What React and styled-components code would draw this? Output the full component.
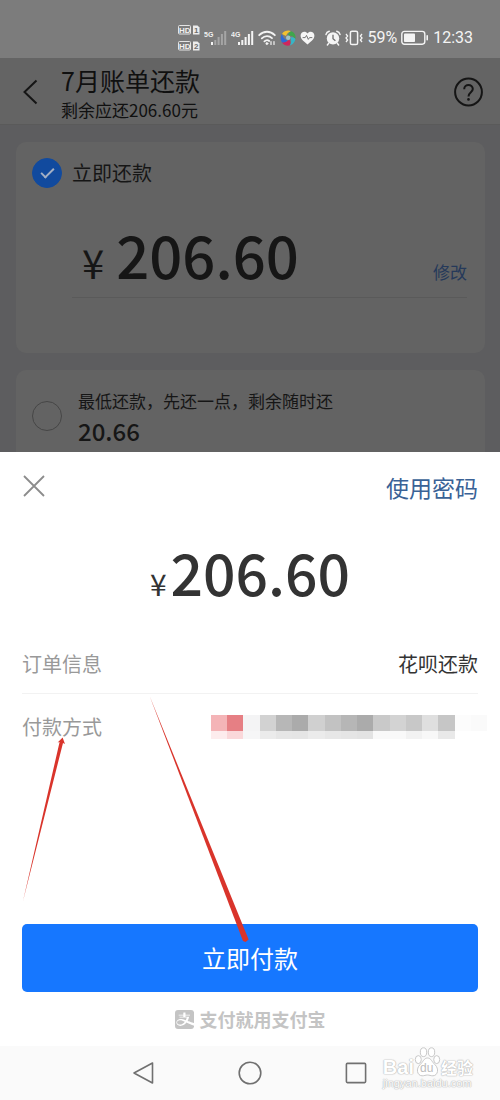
import React from 'react';
import styled, {createGlobalStyle, css} from 'styled-components';
import {BsAlipay} from 'react-icons/bs';

const FONTS = {
  text: "'Noto Sans CJK SC', 'Noto Sans', sans-serif",
  status: "Roboto, 'Noto Sans CJK SC', sans-serif",
  latin: "'Liberation Sans', Arial, sans-serif"
};

const COLORS = {
  statusBar: '#7c7c7c',
  header: '#646464',
  page: '#5d5d5f',
  card: '#636363',
  dimLine: '#5a5a5a',
  dimText: '#161616',
  dimLink: '#25395a',
  text: '#333333',
  label: '#999999',
  link: '#3a6296',
  primary: '#1677ff',
  slogan: '#c4c4c4',
  line: '#f2f2f2',
  nav: '#fafafa',
  arrow: '#d9342b'
};

const GlobalStyle = createGlobalStyle`
  *, *::before, *::after {
    box-sizing: border-box;
  }

  body {
    margin: 0;
    background: #ffffff;
    font-family: ${FONTS.text};
  }

  h1, p, dl, dt, dd {
    margin: 0;
    font-weight: 400;
  }
`;

const buttonReset = css`
  appearance: none;
  background: none;
  border: 0;
  cursor: pointer;
  font-family: inherit;
  padding: 0;
`;

const Screen = styled.div`
  display: flex;
  flex-direction: column;
  min-height: 100vh;
`;

/* Status bar */

const StatusBar = styled.div`
  align-items: center;
  background: ${COLORS.statusBar};
  color: #f4f4f4;
  display: flex;
  font-family: ${FONTS.status};
  font-size: 16px;
  gap: 10px;
  height: 58px;
  justify-content: flex-end;
  line-height: 20px;
  padding: 18px 27px 0 0;
`;

const StatusGroup = styled.div`
  align-items: center;
  display: flex;
  gap: 4px;

  svg {
    display: block;
    flex: none;
  }
`;

const HdIcon = () => (
  <svg width="22" height="26" viewBox="0 0 22 26" fontFamily={FONTS.latin} fontWeight="700" fontSize="8">
    {['1', '2'].map((sim, i) => (
      <g key={sim} transform={`translate(0 ${i * 16})`}>
        <rect x="0.5" y="0.5" width="12" height="8.5" rx="1" fill="none" stroke="#e4e4e4" />
        <text x="1" y="7.6" fill="#f0f0f0">HD</text>
        <path d="M15 0.5h4.5l2 2V9.5h-6.5z" fill="#ececec" />
        <text x="16" y="7.8" fill="#6c6c6c">{sim}</text>
      </g>
    ))}
  </svg>
);

const SignalIcon = ({label, strength}) => (
  <svg width="23" height="18" viewBox="0 0 23 18">
    <text x="0" y="8" fill="#f0f0f0" fontFamily={FONTS.latin} fontWeight="700" fontSize="7">{label}</text>
    {[3, 5, 8, 11, 14].map((h, i) => (
      <rect
        key={h}
        x={7 + i * 3.3}
        y={16 - h}
        width="2"
        height={h}
        fill="#f4f4f4"
        opacity={i < strength ? 1 : 0.35}
      />
    ))}
  </svg>
);

const WifiIcon = () => (
  <svg width="18" height="16" viewBox="0 0 18 16" fill="none" stroke="#f4f4f4" strokeWidth="1.8" strokeLinecap="round">
    <path d="M1.2 5.2C5.8 0.6 12.2 0.6 16.8 5.2" />
    <path d="M3.8 8.4C6.8 5.4 11.2 5.4 14 8.2" />
    <path d="M6.4 11.4C8 9.9 9.8 9.9 11.2 11" />
    <circle cx="8.9" cy="13.6" r="1" fill="#f4f4f4" strokeWidth="0.8" />
    <path d="M13 14.5V11.5M16 11.5v3" strokeWidth="1.2" />
  </svg>
);

const BallIcon = () => (
  <svg width="16" height="16" viewBox="0 0 16 16">
    <path d="M2 4C4 0.5 9 0 11 1.2C8.5 2 6.8 3.6 6 6Z" fill="#f2c230" />
    <path d="M11 1.2C15 2.5 16 6 15.4 9C13.5 6.2 11.5 5.2 8 5.4C8.4 3.2 9.6 2 11 1.2Z" fill="#3fa64b" />
    <path d="M15.4 9C14.8 12.5 12 15 9.6 15.6C11.4 13 11.6 11 10.4 7.4C12.6 7 14.4 7.6 15.4 9Z" fill="#35b6c8" />
    <path d="M9.6 15.6C6 16.2 3 14.4 1.8 12.2C5 12.6 7 12 9.4 9.6C10.8 12 10.6 14 9.6 15.6Z" fill="#d0265c" />
    <path d="M1.8 12.2C0 9 0.4 6 2 4C2.6 7 4 9 7.6 10.4C6 12 4 12.8 1.8 12.2Z" fill="#2c6bd8" />
    <circle cx="8.2" cy="7.8" r="2.2" fill="#9fc4c8" />
  </svg>
);

const HeartIcon = () => (
  <svg width="15" height="14" viewBox="0 0 15 14">
    <path d="M7.5 13.4C2.6 9.8 0.6 7.6 0.6 4.6C0.6 0.6 5.6-0.6 7.5 2.6C9.4-0.6 14.4 0.6 14.4 4.6C14.4 7.6 12.4 9.8 7.5 13.4Z" fill="#f6f6f6" />
    <path d="M2.6 6.6h2.6l1.3-2.2 1.8 4 1.2-1.8h2.8" fill="none" stroke="#777777" />
  </svg>
);

const AlarmIcon = () => (
  <svg width="16" height="16" viewBox="0 0 16 16">
    <circle cx="8" cy="8.4" r="6.2" fill="#f4f4f4" />
    <path d="M1 4.4C1.4 2.8 2.6 1.6 4.2 1.2M15 4.4C14.6 2.8 13.4 1.6 11.8 1.2M3.6 13.4L2.4 15M12.4 13.4l1.2 1.6" fill="none" stroke="#f4f4f4" strokeWidth="1.5" strokeLinecap="round" />
    <path d="M8 4.8v4l2.4 2" fill="none" stroke="#6e6e6e" strokeWidth="1.3" />
  </svg>
);

const VibrateIcon = () => (
  <svg width="18" height="16" viewBox="0 0 18 16" fill="none" stroke="#f4f4f4">
    <rect x="5.4" y="1.2" width="7.2" height="13.4" rx="1.6" strokeWidth="1.5" />
    <path d="M1 4l1.6 2L1 8l1.6 2L1 12M17 4l-1.6 2L17 8l-1.6 2L17 12" strokeWidth="1.3" />
  </svg>
);

const BatteryIcon = () => (
  <svg width="28" height="16" viewBox="0 0 28 16">
    <rect x="0.8" y="1.4" width="23" height="12.8" rx="2.6" fill="none" stroke="#f4f4f4" strokeWidth="1.4" />
    <rect x="3" y="3.6" width="11" height="8.4" rx="0.8" fill="#f4f4f4" />
    <rect x="25.4" y="5" width="1.6" height="5.6" rx="0.8" fill="#f4f4f4" />
  </svg>
);

/* Bill page under the mask */

const BillHeader = styled.header`
  align-items: center;
  background: ${COLORS.header};
  border-bottom: 1px solid ${COLORS.dimLine};
  color: #101010;
  display: flex;
  padding: 4px 16px 2px;
`;

const IconButton = styled.button`
  ${buttonReset}
  align-items: center;
  color: ${({$color}) => $color};
  display: flex;
  flex: none;
  height: 30px;
  justify-content: center;
  width: 30px;
`;

const BillTitle = styled.div`
  flex: 1;
  padding-left: 15px;
`;

const Title = styled.h1`
  font-size: 25px;
  line-height: 36px;
`;

const Subtitle = styled.p`
  font-size: 17px;
  line-height: 24px;
`;

const BillBody = styled.main`
  background: ${COLORS.page};
  color: ${COLORS.dimText};
  display: flex;
  flex-direction: column;
  gap: 17px;
  padding: 17px 15px 0 16px;
`;

const Card = styled.section`
  background: ${COLORS.card};
  border-radius: ${({$cut}) => ($cut ? '10px 10px 0 0' : '10px')};
  padding: ${({$cut}) => ($cut ? '16px 18px 6px 16px' : '16px 18px 55px 16px')};
`;

const Option = styled.label`
  align-items: center;
  display: flex;
  font-size: ${({$size}) => $size};
  gap: ${({$gap}) => $gap};
  line-height: 30px;
`;

const Radio = styled.input`
  appearance: none;
  border: 1px solid #464646;
  border-radius: 50%;
  display: grid;
  flex: none;
  height: 30px;
  margin: 0;
  place-items: center;
  width: 30px;

  &:checked {
    background: #114a9e;
    border-color: #114a9e;
  }

  &:checked::after {
    border: solid #a4b0c4;
    border-width: 0 0 2px 2px;
    content: '';
    height: 7px;
    margin-bottom: 4px;
    transform: rotate(-45deg);
    width: 13px;
  }
`;

const MinimumAmount = styled.span`
  display: block;
  font-size: 24px;
  font-weight: 500;
`;

const RepayRow = styled.div`
  align-items: baseline;
  border-bottom: 1px solid ${COLORS.dimLine};
  display: flex;
  justify-content: space-between;
  margin: 30px 0 0 40px;
  padding: 0 0 7px 10px;
`;

const Amount = styled.p`
  align-items: baseline;
  display: flex;
  font-size: ${({$size}) => $size};
  font-weight: 500;
  gap: ${({$gap}) => $gap};
  line-height: 72px;
`;

const Currency = styled.span`
  font-size: ${({$size}) => $size};
  font-weight: 400;
  line-height: 40px;
`;

const TextButton = styled.button`
  ${buttonReset}
  color: ${({$color}) => $color};
  font-size: ${({$size}) => $size};
  line-height: 34px;
`;

/* Payment sheet */

const Sheet = styled.section`
  background: #ffffff;
  color: ${COLORS.text};
  display: flex;
  flex: 1;
  flex-direction: column;
  padding: 18px 22px 0;
  position: relative;
`;

const SheetBar = styled.div`
  align-items: center;
  display: flex;
  justify-content: space-between;
  margin-left: -3px;
`;

const SheetAmount = styled.div`
  display: flex;
  justify-content: center;
  margin-top: 31px;
`;

const Details = styled.dl`
  font-size: 20px;
  line-height: 30px;
  margin-top: 24px;
`;

const DetailRow = styled.div`
  align-items: center;
  display: flex;
  justify-content: space-between;
  padding: 18px 0 14px;

  & + & {
    border-top: 1px solid ${COLORS.line};
  }
`;

const DetailLabel = styled.dt`
  color: ${COLORS.label};
`;

const DetailValue = styled.dd`
  display: flex;
  margin-right: ${({$bleed}) => ($bleed ? '-9px' : '0')};
`;

const PayButton = styled.button`
  ${buttonReset}
  background: ${COLORS.primary};
  border-radius: 5px;
  color: #ffffff;
  font-size: 24px;
  line-height: 36px;
  margin-top: auto;
  padding: 16px;
`;

const Slogan = styled.p`
  align-items: center;
  color: ${COLORS.slogan};
  display: flex;
  font-size: 18px;
  font-weight: 700;
  gap: 6px;
  justify-content: center;
  line-height: 26px;
  padding: 14px 0;
`;

const Arrows = styled.svg`
  left: 0;
  pointer-events: none;
  position: absolute;
  top: 0;
`;

const MASK_ROWS = [
  ['#f4b4b7', '#e67f84', '#f4f4f5', '#d2d2d2', '#b7b7b7', '#ababab', '#d0d0d0', '#c2c2c2', '#b6b6b6', '#ababab', '#c9c9c9', '#d3d3d3', '#c8c8c8', '#dfdfdf', '#c6c6c6', '#fcfcfc', '#fafafa'],
  ['#fdeced', '#fad8da', '#f6f6f7', '#ebebeb', '#e6e6e6', '#e5e5e5', '#ebebeb', '#e7e7e7', '#e5e5e5', '#e3e3e3', '#f9f9f9', '#f9f9f9', '#f2f2f2', '#f8f8f8', '#e9e9e9', '#ffffff', '#ffffff']
];

const MaskedAccount = () => (
  <svg width="276" height="24" viewBox="0 0 17 24" preserveAspectRatio="none" shapeRendering="crispEdges" role="img">
    {MASK_ROWS.map((row, y) => row.map((fill, x) => (
      <rect key={`${x}-${y}`} x={x} y={y * 16} width="1" height={y ? 8 : 16} fill={fill} />
    )))}
  </svg>
);

/* System navigation */

const NavBar = styled.nav`
  align-items: center;
  background: ${COLORS.nav};
  display: flex;
  height: 54px;
  justify-content: center;
  position: relative;
`;

const NavButton = styled.button`
  ${buttonReset}
  display: flex;
  justify-content: center;
  width: 106px;
`;

const NavIcon = ({children}) => (
  <svg width="26" height="26" viewBox="0 0 26 26" fill="none" stroke="#707070" strokeWidth="1.6" strokeLinejoin="round">
    {children}
  </svg>
);

const Watermark = styled.div`
  bottom: 11px;
  color: #ffffff;
  pointer-events: none;
  position: absolute;
  right: 27px;
  text-shadow: 0 0 1px #b4b4b4, 0 0 1px #b4b4b4, 0 0 2px #d0d0d0;
`;

const WatermarkBrand = styled.div`
  align-items: flex-end;
  display: flex;
  font-family: ${FONTS.latin};
  font-size: 20px;
  font-weight: 700;
  line-height: 20px;

  svg {
    flex: none;
  }
`;

const WatermarkCjk = styled.span`
  font-family: ${FONTS.text};
  font-size: 16px;
`;

const WatermarkUrl = styled.div`
  font-family: ${FONTS.latin};
  font-size: 11px;
  line-height: 12px;
`;

const App = () => (
  <Screen>
    <GlobalStyle />
    <StatusBar>
      <StatusGroup>
        <HdIcon />
        <SignalIcon label="5G" strength={1} />
        <SignalIcon label="4G" strength={5} />
        <WifiIcon />
        <BallIcon />
        <HeartIcon />
      </StatusGroup>
      <StatusGroup>
        <AlarmIcon />
        <VibrateIcon />
        <span>59%</span>
        <BatteryIcon />
        <span>12:33</span>
      </StatusGroup>
    </StatusBar>

    <BillHeader>
      <IconButton type="button" aria-label="返回" $color="#151515">
        <svg width="30" height="30" viewBox="0 0 30 30" fill="none" stroke="currentColor" strokeWidth="2">
          <path d="M20.5 3.5L8.5 15l12 11.5" />
        </svg>
      </IconButton>
      <BillTitle>
        <Title>7月账单还款</Title>
        <Subtitle>剩余应还206.60元</Subtitle>
      </BillTitle>
      <IconButton type="button" aria-label="帮助" $color="#151515">
        <svg width="30" height="30" viewBox="0 0 30 30" fill="none" stroke="currentColor" strokeWidth="2">
          <circle cx="14.5" cy="15" r="13.4" />
          <path d="M10.2 12.2C10.2 6.6 18.8 6.6 18.8 12C18.8 15.2 14.5 15.2 14.5 19.4" />
          <circle cx="14.5" cy="22.4" r="1.3" fill="currentColor" stroke="none" />
        </svg>
      </IconButton>
    </BillHeader>

    <BillBody>
      <Card>
        <Option $size="20px" $gap="10px">
          <Radio type="radio" name="repay" defaultChecked />
          立即还款
        </Option>
        <RepayRow>
          <Amount $size="58px" $gap="12px">
            <Currency $size="40px">¥</Currency>
            206.60
          </Amount>
          <TextButton type="button" $color={COLORS.dimLink} $size="17px">修改</TextButton>
        </RepayRow>
      </Card>
      <Card $cut>
        <Option $size="17px" $gap="16px">
          <Radio type="radio" name="repay" />
          <span>
            最低还款，先还一点，剩余随时还
            <MinimumAmount>20.66</MinimumAmount>
          </span>
        </Option>
      </Card>
    </BillBody>

    <Sheet>
      <SheetBar>
        <IconButton type="button" aria-label="关闭" $color="#8c8c8c">
          <svg width="30" height="30" viewBox="0 0 30 30" fill="none" stroke="currentColor" strokeWidth="1.8">
            <path d="M5 4l20 20M25 4L5 24" />
          </svg>
        </IconButton>
        <TextButton type="button" $color={COLORS.link} $size="23px">使用密码</TextButton>
      </SheetBar>
      <SheetAmount>
        <Amount $size="57px" $gap="4px">
          <Currency $size="30px">¥</Currency>
          206.60
        </Amount>
      </SheetAmount>
      <Details>
        <DetailRow>
          <DetailLabel>订单信息</DetailLabel>
          <DetailValue>花呗还款</DetailValue>
        </DetailRow>
        <DetailRow>
          <DetailLabel>付款方式</DetailLabel>
          <DetailValue $bleed>
            <MaskedAccount />
          </DetailValue>
        </DetailRow>
      </Details>
      <PayButton type="button">立即付款</PayButton>
      <Slogan>
        <BsAlipay size={19} />
        支付就用支付宝
      </Slogan>
      <Arrows width="260" height="500" viewBox="0 0 260 500" fill={COLORS.arrow}>
        <path d="M23 449L59.6 290L57.6 290.4L62.6 285.4L65 292L63 291Z" />
        <path d="M149.6 244L243 489L245.6 490L248.6 487.6L248 486Z" />
      </Arrows>
    </Sheet>

    <NavBar>
      <NavButton type="button" aria-label="后退">
        <NavIcon><path d="M21.5 3v20L3 13z" /></NavIcon>
      </NavButton>
      <NavButton type="button" aria-label="主屏幕">
        <NavIcon><circle cx="13" cy="13" r="10.8" /></NavIcon>
      </NavButton>
      <NavButton type="button" aria-label="最近任务">
        <NavIcon><rect x="3.4" y="3.4" width="19.2" height="19.2" rx="1" /></NavIcon>
      </NavButton>
      <Watermark>
        <WatermarkBrand>
          <span>Bai</span>
          <svg width="27" height="30" viewBox="0 0 27 30" fill="#ffffff" stroke="#c8c8c8">
            <ellipse cx="4.3" cy="12.6" rx="3" ry="4" />
            <ellipse cx="9.5" cy="5.2" rx="3.2" ry="4.4" />
            <ellipse cx="17.5" cy="5.2" rx="3.2" ry="4.4" />
            <ellipse cx="22.7" cy="12.6" rx="3" ry="4" />
            <path d="M13.5 11C9.9 11 9.1 15 5.9 17.8C1.9 21.6 2.9 28.6 8.1 28.8C10.5 28.8 11.5 28 13.5 28C15.5 28 16.5 28.8 18.9 28.8C24.1 28.6 25.1 21.6 21.1 17.8C17.9 15 17.1 11 13.5 11Z" />
            <text x="6" y="25.4" fontSize="12" fontWeight="400" fill="#bdbdbd" stroke="none" style={{textShadow: 'none'}}>du</text>
          </svg>
          <WatermarkCjk>经验</WatermarkCjk>
        </WatermarkBrand>
        <WatermarkUrl>jingyan.baidu.com</WatermarkUrl>
      </Watermark>
    </NavBar>
  </Screen>
);

export default App;
